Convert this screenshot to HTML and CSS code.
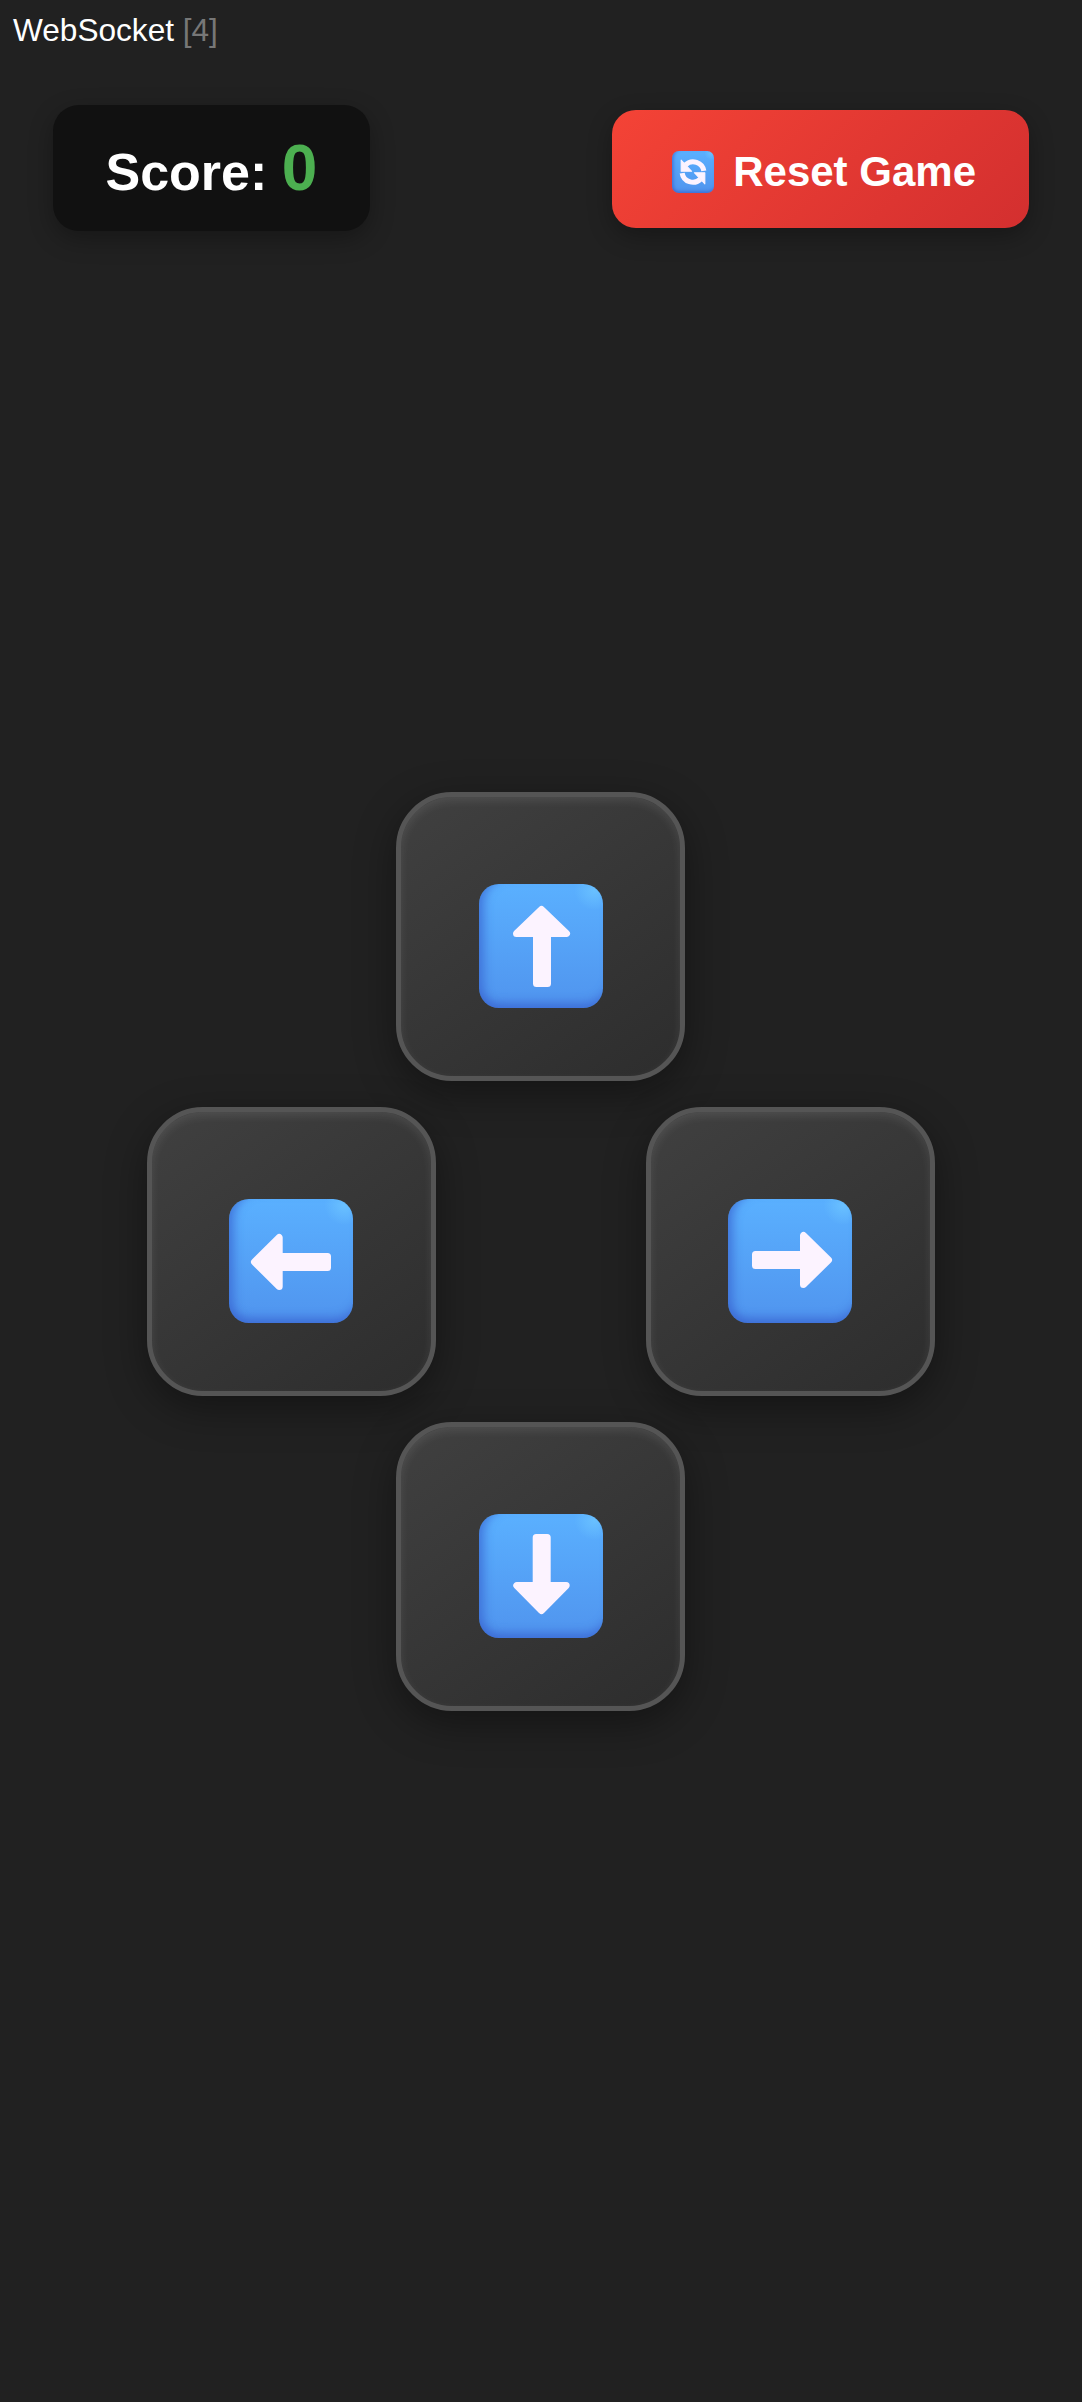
FILE: index.html
```html
<!DOCTYPE html>
<html lang="en">
<head>
<meta charset="utf-8">
<title>Snake controls</title>
<link rel="stylesheet" href="styles.css">
</head>
<body>
<div class="status">WebSocket <span class="status-count">[4]</span></div>
<header class="topbar">
  <div class="score">Score: <span class="score-value">0</span></div>
  <button class="reset" type="button">
    <span class="tile tile-small">
      <svg class="glyph" viewBox="0 0 124 124">
        <g class="refresh">
          <path class="refresh-arc" d="M94 59A32 32 0 0 0 40 41"/>
          <path class="refresh-head" d="M27 27L27 60L58 60Z"/>
          <path class="refresh-arc" d="M30 65A32 32 0 0 0 84 83"/>
          <path class="refresh-head" d="M97 97L97 64L66 64Z"/>
        </g>
      </svg>
    </span>
    <span>Reset Game</span>
  </button>
</header>
<main class="dpad">
  <button class="pad pad-up" type="button" aria-label="Up">
    <span class="tile"><svg class="glyph" viewBox="0 0 124 124"><polygon class="arrow" points="37.5,49.5 62.5,25.5 87.5,49.5 68.5,49.5 68.5,99.5 57.5,99.5 57.5,49.5"/></svg></span>
  </button>
  <button class="pad pad-left" type="button" aria-label="Left">
    <span class="tile"><svg class="glyph" viewBox="0 0 124 124"><polygon class="arrow" points="25.5,63 50.2,38.5 50.2,57.5 98.5,57.5 98.5,68.5 50.2,68.5 50.2,87.5"/></svg></span>
  </button>
  <button class="pad pad-right" type="button" aria-label="Right">
    <span class="tile"><svg class="glyph" viewBox="0 0 124 124"><polygon class="arrow" points="100.5,61 75.5,36.5 75.5,55.5 27.5,55.5 27.5,66.5 75.5,66.5 75.5,85.5"/></svg></span>
  </button>
  <button class="pad pad-down" type="button" aria-label="Down">
    <span class="tile"><svg class="glyph" viewBox="0 0 124 124"><polygon class="arrow" points="62.5,96.5 37.8,71.5 57.2,71.5 57.2,23.5 68.2,23.5 68.2,71.5 87.2,71.5"/></svg></span>
  </button>
</main>
</body>
</html>
```

FILE: styles.css
```css
* { box-sizing: border-box; }

html, body {
  margin: 0;
  height: 100%;
}

body {
  background: #212121;
  color: #fff;
  font-family: "Liberation Sans", Arial, sans-serif;
}

.status {
  padding: 12px 0 0 13px;
  font-size: 31.6px;
  line-height: 37px;
}

.status-count { color: #777; }

.topbar {
  display: flex;
  align-items: center;
  justify-content: space-between;
  margin-top: 56px;
  padding: 0 53px;
}

.score {
  height: 126px;
  padding: 26px 52.5px 0;
  border-radius: 26px;
  background: #111;
  box-shadow: 0 8px 24px rgba(0, 0, 0, 0.3);
  font-size: 52px;
  font-weight: 700;
  line-height: 74px;
  white-space: nowrap;
}

.score-value {
  color: #4caf50;
  font-size: 64px;
}

.reset {
  display: flex;
  align-items: center;
  gap: 19px;
  height: 118px;
  margin-top: 2px;
  padding: 5px 53px 0 60px;
  border: 0;
  border-radius: 24px;
  background: linear-gradient(135deg, #f44336, #d32f2f);
  box-shadow: 0 8px 24px rgba(0, 0, 0, 0.3);
  color: #fff;
  font-family: inherit;
  font-size: 42px;
  font-weight: 700;
}

.dpad {
  display: grid;
  grid-template-columns: repeat(3, 249.5px);
  grid-template-rows: repeat(3, 289px);
  row-gap: 26px;
  justify-content: center;
  justify-items: center;
  margin-top: 561px;
  padding-right: 1px;
}

.pad {
  display: flex;
  align-items: center;
  justify-content: center;
  width: 289px;
  height: 289px;
  padding: 18px 0 0;
  border: 5px solid #555;
  border-radius: 56px;
  background: linear-gradient(145deg, #404040, #2d2d2d);
  box-shadow:
    0 12px 40px rgba(0, 0, 0, 0.4),
    inset 0 4px 10px rgba(255, 255, 255, 0.09);
}

.pad-up { grid-area: 1 / 2; }
.pad-left { grid-area: 2 / 1; }
.pad-right { grid-area: 2 / 3; }
.pad-down { grid-area: 3 / 2; }

.tile {
  display: block;
  flex: none;
  width: 1em;
  height: 1em;
  border-radius: 0.16em;
  font-size: 124px;
  background:
    radial-gradient(circle at 93% 5%, #69c0ff 0, rgba(105, 192, 255, 0) 0.16em),
    linear-gradient(180deg, #5ab0ff 0%, #5094ee 100%);
  box-shadow:
    inset 0.1em 0 0.08em -0.06em rgba(60, 108, 212, 0.8),
    inset 0 -0.1em 0.08em -0.06em rgba(60, 104, 212, 0.85);
}

.tile-small { font-size: 42px; }

.glyph {
  display: block;
  width: 100%;
  height: 100%;
}

.arrow {
  fill: #fcf3ff;
  stroke: #fcf3ff;
  stroke-width: 7;
  stroke-linejoin: round;
}

.refresh-arc {
  fill: none;
  stroke: #fcf3ff;
  stroke-width: 15;
}

.refresh-head {
  fill: #fcf3ff;
  stroke: #fcf3ff;
  stroke-width: 3;
  stroke-linejoin: round;
}
```
